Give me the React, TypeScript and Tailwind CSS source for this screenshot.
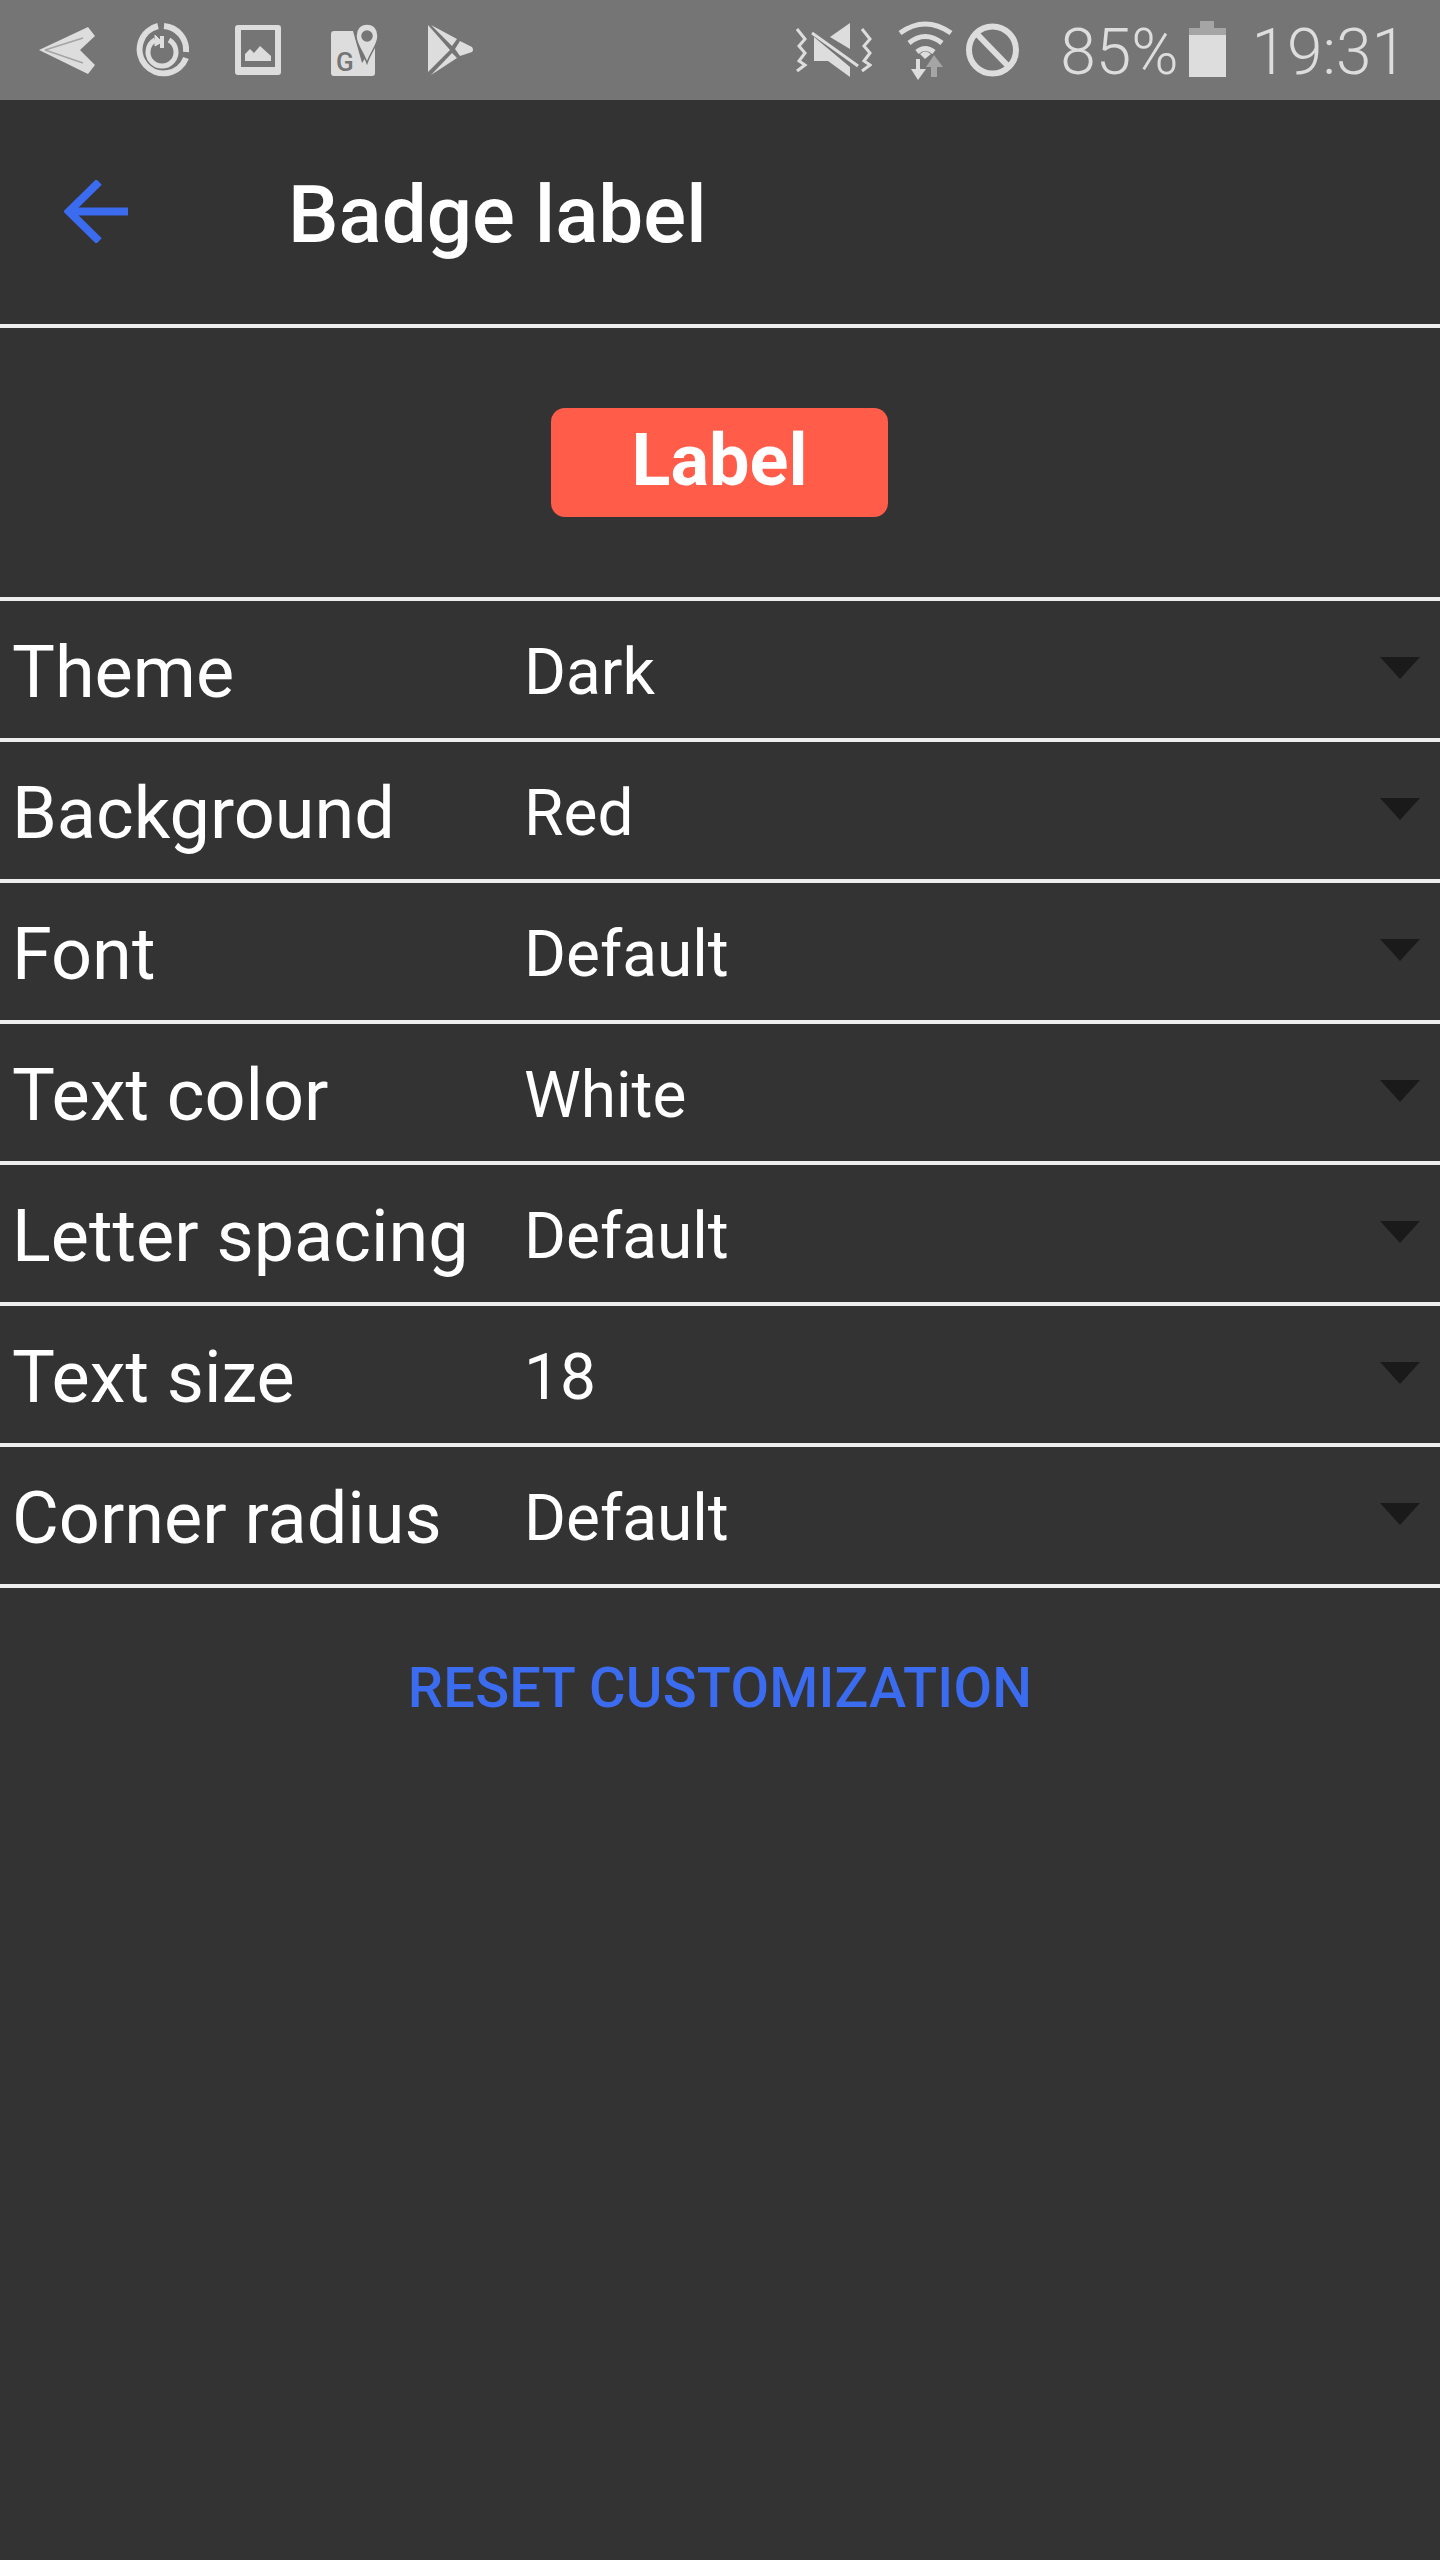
const rows = [
  { label: "Theme", value: "Dark" },
  { label: "Background", value: "Red" },
  { label: "Font", value: "Default" },
  { label: "Text color", value: "White" },
  { label: "Letter spacing", value: "Default" },
  { label: "Text size", value: "18" },
  { label: "Corner radius", value: "Default" },
];

function SendIcon() {
  return (
    <svg width="56" height="47" viewBox="0 0 56 47" className="ml-[39px] blur-[0.6px]">
      <path d="M0 23 L49 0 L56 9 L41 23 L56 38 L49 47 Z" fill="#dddddd" />
      <path d="M6 23 L44 11 M6 23 L44 36" stroke="#a5a5a5" strokeWidth="1.5" />
    </svg>
  );
}

function TimerIcon() {
  return (
    <svg width="54" height="54" viewBox="0 0 54 54" fill="none" stroke="#dddddd" className="ml-[40px]">
      <path d="M23 3 A24 24 0 1 0 51 35" strokeWidth="6" />
      <path d="M29 3 A24 24 0 0 1 51 29" strokeWidth="6" />
      <path d="M20 17 A14 14 0 1 0 34 17" strokeWidth="5" />
      <path d="M27 13 V25" strokeWidth="4" />
      <path d="M20 12 L27 19 L20 23 Z" fill="#dddddd" strokeWidth="1" />
    </svg>
  );
}

function ImageIcon() {
  return (
    <svg width="46" height="50" viewBox="0 0 46 50" className="ml-[46px]">
      <path fillRule="evenodd" d="M3 0 H43 Q46 0 46 3 V47 Q46 50 43 50 H3 Q0 50 0 47 V3 Q0 0 3 0 Z M6 5 V42 H40 V5 Z" fill="#dddddd" />
      <path d="M10 36 V29 L15 24 L19 28 L25 21 L36 31 V36 Z" fill="#dddddd" />
    </svg>
  );
}

function MapsIcon() {
  return (
    <svg width="48" height="53" viewBox="0 0 48 53" className="ml-[50px]">
      <path d="M3 7 H22 L31 39 L44 20 V49 Q44 52 41 52 H3 Q0 52 0 49 V10 Q0 7 3 7 Z" fill="#dddddd" />
      <path fillRule="evenodd" d="M36 0 C43 0 47 5 47 12 C47 21 40 27 36 39 C32 27 25 21 25 12 C25 5 29 0 36 0 Z M36 7 A5 5 0 1 0 36 17 A5 5 0 1 0 36 7 Z" fill="#dddddd" stroke="#757575" strokeWidth="1.5" />
      <text x="5" y="47" fontFamily="Roboto, sans-serif" fontSize="26" fontWeight="500" fill="#757575">G</text>
    </svg>
  );
}

function PlayIcon() {
  return (
    <svg width="46" height="50" viewBox="0 0 46 50" className="ml-[49px]">
      <path d="M0 0 L22 25 L0 47 Z" fill="#dddddd" />
      <path d="M3 0 L29 14 L24 21 Z" fill="#dddddd" />
      <path d="M3 50 L29 33 L24 28 Z" fill="#dddddd" />
      <path d="M32 16 L44 22 Q46 25 44 27 L32 31 L27 24 Z" fill="#dddddd" />
    </svg>
  );
}

function MuteIcon() {
  return (
    <svg width="76" height="54" viewBox="0 0 76 54" fill="none" className="mr-[26px]">
      <path d="M1 6 L9 16 L3 23 L9 30 L3 38 L9 42 L1 48" stroke="#dddddd" strokeWidth="3" />
      <path d="M66 6 L74 16 L68 23 L74 30 L68 38 L74 42 L66 48" stroke="#dddddd" strokeWidth="3" />
      <path d="M54 0 V26 L34 14 Z" fill="#dddddd" />
      <path d="M18 14 L54 44 V54 L32 38 H18 Z" fill="#dddddd" />
      <path d="M16 10 L62 43" stroke="#dddddd" strokeWidth="3" />
    </svg>
  );
}

function WifiIcon() {
  return (
    <svg width="55" height="59" viewBox="0 0 55 59" fill="none" stroke="#dddddd" className="mr-[12px]">
      <path d="M2 12 Q27 -6 53 12" strokeWidth="5" />
      <path d="M11 22 Q27 9 44 22" strokeWidth="5" />
      <path d="M19 31 Q27 24 36 31" strokeWidth="5" />
      <path d="M22 33 Q27 28 33 33 L27 38 Z" fill="#dddddd" stroke="none" />
      <path d="M20 38 V50" strokeWidth="4" />
      <path d="M13 48 H28 L20 59 Z" fill="#dddddd" stroke="none" />
      <path d="M36 45 V56" stroke="#a5a5a5" strokeWidth="6" />
      <path d="M28 46 L36 34 L45 46 Z" fill="#a5a5a5" stroke="none" />
    </svg>
  );
}

function BanIcon() {
  return (
    <svg width="53" height="54" viewBox="0 0 53 54" fill="none" stroke="#dddddd" strokeWidth="6" className="mr-[41px] ml-[1px]">
      <circle cx="26.5" cy="27" r="23.5" />
      <path d="M10 10 L43 44" />
    </svg>
  );
}

function BatteryIcon() {
  return (
    <div className="mb-[2px] ml-[10px] flex w-[37px] flex-col items-center">
      <div className="h-[7px] w-[14px] bg-[#a5a5a5]" />
      <div className="h-[7px] w-full bg-[#a5a5a5]" />
      <div className="h-[42px] w-full bg-[#dddddd]" />
    </div>
  );
}

export default function App() {
  return (
    <div
      className="min-h-[2560px] w-[1440px] bg-[#333333] text-white"
      style={{ fontFamily: "Roboto, sans-serif" }}
    >
      {/* status bar */}
      <div className="flex h-[100px] items-center justify-between bg-[#757575] text-[#dddddd]">
        <div className="flex items-center">
          <SendIcon />
          <TimerIcon />
          <ImageIcon />
          <MapsIcon />
          <PlayIcon />
        </div>
        <div className="flex items-center pr-[33px]">
          <MuteIcon />
          <WifiIcon />
          <BanIcon />
          <span className="mt-[6px] text-[64px] leading-none font-light">85%</span>
          <BatteryIcon />
          <span className="ml-[26px] mt-[6px] text-[64px] leading-none font-light">19:31</span>
        </div>
      </div>

      {/* header */}
      <div className="flex h-[228px] items-center border-b-4 border-[#eeeeee]">
        <svg width="64" height="63" viewBox="0 0 64 63" fill="none" stroke="#3b6bef" strokeWidth="8" className="ml-[64px] mb-[2px]">
          <path d="M64 31.5 H6" />
          <path d="M35 2 L5 31.5 L35 61" />
        </svg>
        <h1 className="ml-[160px] mt-[6px] text-[80px] leading-none font-medium">Badge label</h1>
      </div>

      {/* preview */}
      <div className="flex h-[273px] items-center justify-center border-b-4 border-[#eeeeee]">
        <div className="mr-[1px] flex h-[109px] w-[337px] items-center justify-center rounded-[14px] bg-[#ff5c4a] pb-[3px] text-[72px] font-bold leading-none">
          Label
        </div>
      </div>

      {/* settings */}
      {rows.map((row) => (
        <div key={row.label} className="relative flex h-[141px] items-center border-b-4 border-[#eeeeee] pl-[12px] pt-[6px]">
          <span className="w-[512px] text-[72px] leading-none">{row.label}</span>
          <span className="text-[64px] leading-none">{row.value}</span>
          <div className="absolute right-[20px] top-[56px] h-0 w-0 border-x-[20px] border-t-[22px] border-x-transparent border-t-[#1a1a1a]" />
        </div>
      ))}

      <div className="flex justify-center pt-[72px]">
        <span className="text-[56px] leading-none font-medium tracking-[0.25px] text-[#3b6bef]">RESET CUSTOMIZATION</span>
      </div>
    </div>
  );
}
